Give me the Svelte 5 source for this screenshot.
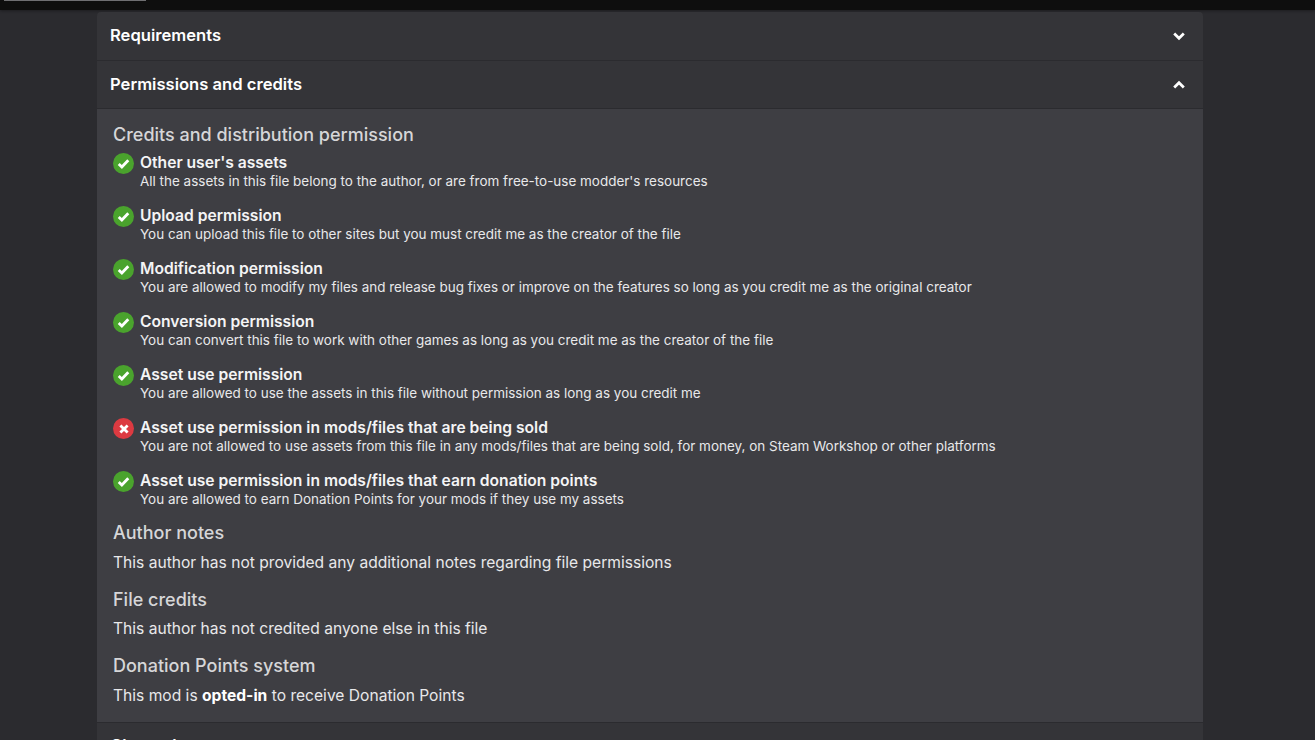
<script>
  const perms = [
    { ok: true, title: "Other user's assets", text: "All the assets in this file belong to the author, or are from free-to-use modder's resources" },
    { ok: true, title: "Upload permission", text: "You can upload this file to other sites but you must credit me as the creator of the file" },
    { ok: true, title: "Modification permission", text: "You are allowed to modify my files and release bug fixes or improve on the features so long as you credit me as the original creator" },
    { ok: true, title: "Conversion permission", text: "You can convert this file to work with other games as long as you credit me as the creator of the file" },
    { ok: true, title: "Asset use permission", text: "You are allowed to use the assets in this file without permission as long as you credit me" },
    { ok: false, title: "Asset use permission in mods/files that are being sold", text: "You are not allowed to use assets from this file in any mods/files that are being sold, for money, on Steam Workshop or other platforms" },
    { ok: true, title: "Asset use permission in mods/files that earn donation points", text: "You are allowed to earn Donation Points for your mods if they use my assets" },
  ];
</script>

<div class="page">
  <div class="topbar"><div class="progress"></div></div>

  <main class="accordion">
    <button class="head first">
      <span>Requirements</span>
      <svg width="12" height="12" viewBox="0 0 12 12" fill="none">
        <path d="M1.2 3.6l4.8 4.6 4.8-4.6" stroke="currentColor" stroke-width="2.8" />
      </svg>
    </button>
    <button class="head open">
      <span>Permissions and credits</span>
      <svg width="12" height="12" viewBox="0 0 12 12" fill="none">
        <path d="M1.2 8.4l4.8-4.6 4.8 4.6" stroke="currentColor" stroke-width="2.8" />
      </svg>
    </button>

    <section class="body">
      <h3>Credits and distribution permission</h3>
      <ul>
        {#each perms as p}
          <li>
            <span class="badge" class:no={!p.ok}>
              {#if p.ok}
                <svg width="13" height="13" viewBox="0 0 12 12" fill="none">
                  <path d="M1.6 6.4l2.9 2.8 5.9-6.2" stroke="#fff" stroke-width="2.6" />
                </svg>
              {:else}
                <svg width="12" height="12" viewBox="0 0 12 12" fill="none">
                  <path d="M2.4 2.4l7.2 7.2M9.6 2.4l-7.2 7.2" stroke="#fff" stroke-width="2.8" />
                </svg>
              {/if}
            </span>
            <div>
              <div class="title">{p.title}</div>
              <div class="desc">{p.text}</div>
            </div>
          </li>
        {/each}
      </ul>

      <h3>Author notes</h3>
      <p>This author has not provided any additional notes regarding file permissions</p>
      <h3>File credits</h3>
      <p>This author has not credited anyone else in this file</p>
      <h3>Donation Points system</h3>
      <p>This mod is <strong>opted-in</strong> to receive Donation Points</p>
    </section>

    <button class="head last">
      <span>Changelogs</span>
    </button>
  </main>
</div>

<style>
  :global(body) {
    margin: 0;
    background: #2b2b2f;
    overflow: hidden;
  }

  .page {
    height: 740px;
    overflow: hidden;
    font-family: Inter, "Noto Sans", sans-serif;
  }

  .topbar {
    height: 10px;
    background: #0e0e0e;
    margin-bottom: 2px;
    box-shadow: 0 1px 3px rgba(0, 0, 0, 0.35);
  }

  .progress {
    width: 142px;
    height: 1px;
    background: #6f6f72;
    margin-left: 4px;
  }

  .accordion {
    width: 1106px;
    margin-left: 97px;
  }

  .head {
    display: flex;
    justify-content: space-between;
    align-items: center;
    width: 100%;
    height: 48px;
    padding: 0 18px 2px 13px;
    border: 0;
    background: #343438;
    color: #fff;
    font: 600 16.6px Inter, sans-serif;
    text-align: left;
  }

  .head svg {
    margin-top: 2px;
  }

  .head.first {
    border-radius: 4px 4px 0 0;
    border-bottom: 1px solid #2b2b2f;
    height: 49px;
  }

  .head.open {
    border-bottom: 1px solid #2b2b2f;
  }

  .head.last {
    border-top: 1px solid #2b2b2f;
    padding-bottom: 4px;
  }

  .body {
    background: #3e3e43;
    padding: 14px 16px 0;
    height: 613px;
    box-sizing: border-box;
  }

  h3 {
    margin: 0;
    font-size: 18px;
    line-height: 24px;
    font-weight: 500;
    color: #d6d6d8;
  }

  ul {
    list-style: none;
    margin: 4px 0 -1px;
    padding: 0;
  }

  li {
    display: flex;
    gap: 6px;
    height: 53px;
  }

  .badge {
    flex: none;
    display: flex;
    align-items: center;
    justify-content: center;
    width: 21px;
    height: 21px;
    margin-top: 2px;
    border-radius: 50%;
    background: #4aa32d;
  }

  .badge.no {
    background: #dc3a41;
  }

  .title {
    margin-top: 1px;
    font-size: 15.65px;
    line-height: 21px;
    font-weight: 600;
    color: #f4f4f5;
  }

  .desc {
    font-size: 13.47px;
    line-height: 16px;
    color: #e8e8ea;
  }

  p {
    margin: 5.5px 0 13px;
    font-size: 15.6px;
    line-height: 24px;
    color: #e8e8ea;
  }

  strong {
    color: #fff;
    font-weight: 700;
  }
</style>
